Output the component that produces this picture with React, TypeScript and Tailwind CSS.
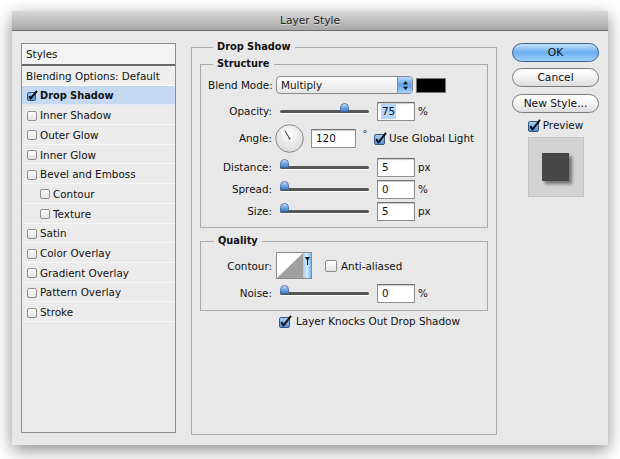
import React from "react";

function Check({ checked, size = 13 }: { checked?: boolean; size?: number }) {
  const b = size - 3;
  if (checked) {
    return (
      <svg width={size} height={size} viewBox={`0 0 ${size} ${size}`} className="shrink-0">
        <defs>
          <linearGradient id="cbg" x1="0" y1="0" x2="0" y2="1">
            <stop offset="0" stopColor="#b3d4f5" />
            <stop offset="0.5" stopColor="#78aee6" />
            <stop offset="1" stopColor="#4f8fd6" />
          </linearGradient>
        </defs>
        <rect x="0.5" y="2.5" width={b} height={b} rx="1.5" fill="url(#cbg)" stroke="#35567e" />
        <path d={`M2.3 ${size * 0.55} L${b * 0.45} ${size - 2.5} L${size - 1} 0.8`} stroke="#0d0d0d" strokeWidth="2" fill="none" strokeLinejoin="round" />
      </svg>
    );
  }
  return (
    <svg width={size} height={size} viewBox={`0 0 ${size} ${size}`} className="shrink-0">
      <defs>
        <linearGradient id="cbw" x1="0" y1="0" x2="0" y2="1">
          <stop offset="0" stopColor="#ffffff" />
          <stop offset="1" stopColor="#e2e2e2" />
        </linearGradient>
      </defs>
      <rect x="0.5" y="1.5" width={b + 1} height={b + 1} rx="1.5" fill="url(#cbw)" stroke="#8c8c8c" />
    </svg>
  );
}

function Slider({ frac }: { frac: number }) {
  const left = frac * (89 - 9);
  return (
    <div className="relative ml-[8px] w-[89px] h-[12px] flex items-center shrink-0">
      <div className="w-full h-[3px] rounded-full bg-[#575757] shadow-[0_1px_0_#ffffff]" />
      <svg className="absolute top-[-2px]" style={{ left }} width="9" height="9" viewBox="0 0 9 9">
        <defs>
          <linearGradient id="thb" x1="0" y1="0" x2="0" y2="1">
            <stop offset="0" stopColor="#d5e8fb" />
            <stop offset="0.5" stopColor="#6ea6e2" />
            <stop offset="1" stopColor="#3c7bc4" />
          </linearGradient>
        </defs>
        <path d="M0.5 8.5 V4.5 Q0.5 0.5 4.5 0.5 Q8.5 0.5 8.5 4.5 V8.5 Z" fill="url(#thb)" stroke="#3d6595" strokeWidth="0.8" />
      </svg>
    </div>
  );
}

function Input({ children, w = 38, cls = "" }: { children: React.ReactNode; w?: number; cls?: string }) {
  return (
    <div
      className={`h-[19px] bg-white border border-[#8e8e8e] border-t-[#6f6f6f] shadow-[inset_0_1px_1px_rgba(0,0,0,0.2)] pl-[3px] flex items-center shrink-0 ${cls}`}
      style={{ width: w }}
    >
      {children}
    </div>
  );
}

function SliderRow({ label, frac, value, unit, cls = "", selected }: { label: string; frac: number; value: string; unit: string; cls?: string; selected?: boolean }) {
  return (
    <div className={`flex items-center h-[20px] ${cls}`}>
      <div className="w-[64px] ml-[7px] text-right shrink-0 whitespace-nowrap">{label}</div>
      <Slider frac={frac} />
      <Input cls="ml-[8px]">
        <span className={selected ? "bg-[#b5d4fa] px-[1px] h-[15px] flex items-center" : "px-[1px]"}>{value}</span>
      </Input>
      <span className="ml-[3px]">{unit}</span>
    </div>
  );
}

const listItems: { name: string; indent?: boolean }[] = [
  { name: "Inner Shadow" },
  { name: "Outer Glow" },
  { name: "Inner Glow" },
  { name: "Bevel and Emboss" },
  { name: "Contour", indent: true },
  { name: "Texture", indent: true },
  { name: "Satin" },
  { name: "Color Overlay" },
  { name: "Gradient Overlay" },
  { name: "Pattern Overlay" },
  { name: "Stroke" },
];

function PillButton({ children, primary }: { children: React.ReactNode; primary?: boolean }) {
  return (
    <div
      className={`h-[19px] w-[87px] rounded-full border flex items-center justify-center text-[10.7px] text-[#111] ${
        primary
          ? "border-[#3f5f8c] bg-gradient-to-b from-[#c3e1fc] via-[#6aaeee] to-[#9fd0fa]"
          : "border-[#7c7c7c] bg-gradient-to-b from-white via-[#f3f3f3] to-[#dcdcdc]"
      }`}
    >
      {children}
    </div>
  );
}

export default function App() {
  return (
    <div className="w-[620px] h-[459px] bg-white pt-[11px] pl-[12px] font-['DejaVu_Sans',sans-serif] text-[10.4px] text-[#111] leading-[12px]">
      <div className="w-[596px] h-[434px] bg-[#e8e8e8] shadow-[0_5px_16px_rgba(0,0,0,0.45)] flex flex-col">
        {/* title bar */}
        <div className="h-[20px] shrink-0 bg-gradient-to-b from-[#d8d8d8] to-[#a7a7a7] border-b border-[#6d6d6d] flex items-center justify-center pt-[1px] text-[10.7px] text-[#222] [text-shadow:0_1px_0_rgba(255,255,255,0.5)]">
          Layer Style
        </div>
        <div className="flex pl-[9px] pr-[9px] pt-[10px]">
          {/* left list */}
          <div className="mt-[2px] w-[155px] h-[390px] border border-[#8c8c8c] bg-[#ebebeb] shrink-0 flex flex-col">
            <div className="h-[22px] shrink-0 bg-[#f3f3f3] border-b-2 border-[#6a6a6a] pl-[4px] flex items-center">Styles</div>
            <div className="h-[19.7px] shrink-0 border-b border-white bg-[#efefef] pl-[4px] pt-[1px] flex items-center">Blending Options: Default</div>
            <div className="h-[19.7px] shrink-0 border-b border-[#dfe9f6] bg-[#c5d9f2] pl-[5px] pt-[1px] flex items-center">
              <Check checked size={11} />
              <span className="ml-[2px] font-bold text-[9.8px]">Drop Shadow</span>
            </div>
            {listItems.map((it) => (
              <div
                key={it.name}
                className={`h-[19.7px] shrink-0 border-b border-[#f7f7f7] pt-[1px] flex items-center ${it.indent ? "pl-[18px]" : "pl-[5px]"}`}
              >
                <Check size={11} />
                <span className="ml-[2px]">{it.name}</span>
              </div>
            ))}
          </div>

          {/* middle */}
          <fieldset className="ml-[15px] w-[306px] h-[394px] border border-[#a9a9a9] px-[8px] shrink-0">
            <legend className="ml-[13px] px-[4px] font-bold text-[9.8px] leading-[12px]">Drop Shadow</legend>
            <fieldset className="mt-[5px] border border-[#a9a9a9] pb-[6px]">
              <legend className="ml-[12px] px-[4px] font-bold text-[9.8px] leading-[12px]">Structure</legend>
              <div className="flex items-center h-[20px] mt-[5px]">
                <div className="w-[64px] ml-[7px] text-right shrink-0 whitespace-nowrap">Blend Mode:</div>
                <div className="ml-[4px] w-[137px] h-[18px] rounded-[4px] border border-[#8b8b8b] bg-gradient-to-b from-white to-[#e6e6e6] flex shrink-0 overflow-hidden">
                  <div className="flex-1 pl-[4px] flex items-center">Multiply</div>
                  <div className="w-[15px] border-l border-[#8b8b8b] bg-gradient-to-b from-[#b9dbfa] via-[#5fa3e6] to-[#a7d3fa] flex items-center justify-center">
                    <svg width="7" height="11" viewBox="0 0 7 11">
                      <path d="M3.5 1 L6 4.2 H1 Z" fill="#111" />
                      <path d="M3.5 10 L6 6.8 H1 Z" fill="#111" />
                    </svg>
                  </div>
                </div>
                <div className="ml-[3px] w-[30px] h-[15px] bg-black border border-[#777] shrink-0" />
              </div>
              <SliderRow label="Opacity:" frac={0.75} value="75" unit="%" cls="mt-[6px]" selected />
              <div className="flex items-center h-[30px] mt-[2px]">
                <div className="w-[64px] ml-[7px] text-right shrink-0">Angle:</div>
                <svg className="ml-[3px] shrink-0" width="29" height="29" viewBox="0 0 29 29">
                  <defs>
                    <radialGradient id="dial" cx="0.5" cy="0.35" r="0.65">
                      <stop offset="0" stopColor="#ffffff" />
                      <stop offset="1" stopColor="#d8d8d8" />
                    </radialGradient>
                  </defs>
                  <circle cx="14.5" cy="14.5" r="13.8" fill="url(#dial)" stroke="#8a8a8a" strokeWidth="1" />
                  <line x1="14.5" y1="14.5" x2="10" y2="6.7" stroke="#333" strokeWidth="1" />
                  <circle cx="14.5" cy="14.5" r="1" fill="#444" />
                </svg>
                <Input w={45} cls="ml-[7px]">
                  <span className="px-[1px]">120</span>
                </Input>
                <span className="w-[18px] text-center self-start mt-[5px] text-[9px]">°</span>
                <Check checked size={13} />
                <span className="ml-[2px]">Use Global Light</span>
              </div>
              <SliderRow label="Distance:" frac={0} value="5" unit="px" cls="mt-[4px]" />
              <SliderRow label="Spread:" frac={0} value="0" unit="%" cls="mt-[2px]" />
              <SliderRow label="Size:" frac={0} value="5" unit="px" cls="mt-[2px]" />
            </fieldset>

            <fieldset className="mt-[7px] border border-[#a9a9a9] pb-[7px]">
              <legend className="ml-[13px] px-[4px] font-bold text-[9.8px] leading-[12px]">Quality</legend>
              <div className="flex items-center h-[27px] mt-[5px]">
                <div className="w-[64px] ml-[7px] text-right shrink-0">Contour:</div>
                <div className="ml-[4px] w-[36px] h-[27px] border border-[#8b8b8b] flex shrink-0">
                  <svg width="26" height="25" viewBox="0 0 26 25" className="bg-white">
                    <polygon points="0,25 26,0 26,25" fill="#a0a0a0" />
                  </svg>
                  <div className="flex-1 bg-gradient-to-r from-[#9ccbf5] via-[#d9ecfd] to-[#7cb7ee] flex justify-center pt-[4px]">
                    <svg width="5" height="8" viewBox="0 0 5 8">
                      <path d="M0 0 H5 L2.5 4 Z M2 3 H3 V8 H2 Z" fill="#111" />
                    </svg>
                  </div>
                </div>
                <div className="ml-[13px] flex items-center">
                  <Check size={13} />
                  <span className="ml-[3px]">Anti-aliased</span>
                </div>
              </div>
              <SliderRow label="Noise:" frac={0} value="0" unit="%" cls="mt-[4px]" />
            </fieldset>

            <div className="mt-[3px] ml-[79px] flex items-center h-[14px]">
              <Check checked size={13} />
              <span className="ml-[4px]">Layer Knocks Out Drop Shadow</span>
            </div>
          </fieldset>

          {/* right */}
          <div className="ml-[15px] w-[87px] mt-[2px] flex flex-col items-center shrink-0">
            <PillButton primary>OK</PillButton>
            <div className="mt-[6px]">
              <PillButton>Cancel</PillButton>
            </div>
            <div className="mt-[7px]">
              <PillButton>New Style...</PillButton>
            </div>
            <div className="mt-[5px] h-[14px] flex items-center">
              <Check checked size={13} />
              <span className="ml-[2px]">Preview</span>
            </div>
            <div className="mt-[5px] w-[56px] h-[60px] bg-[#d2d2d2] border border-[#c4c4c4] flex items-center justify-center">
              <div className="w-[27px] h-[28px] bg-[#474747] shadow-[3px_3px_3px_rgba(0,0,0,0.45)]" />
            </div>
          </div>
        </div>
      </div>
    </div>
  );
}
